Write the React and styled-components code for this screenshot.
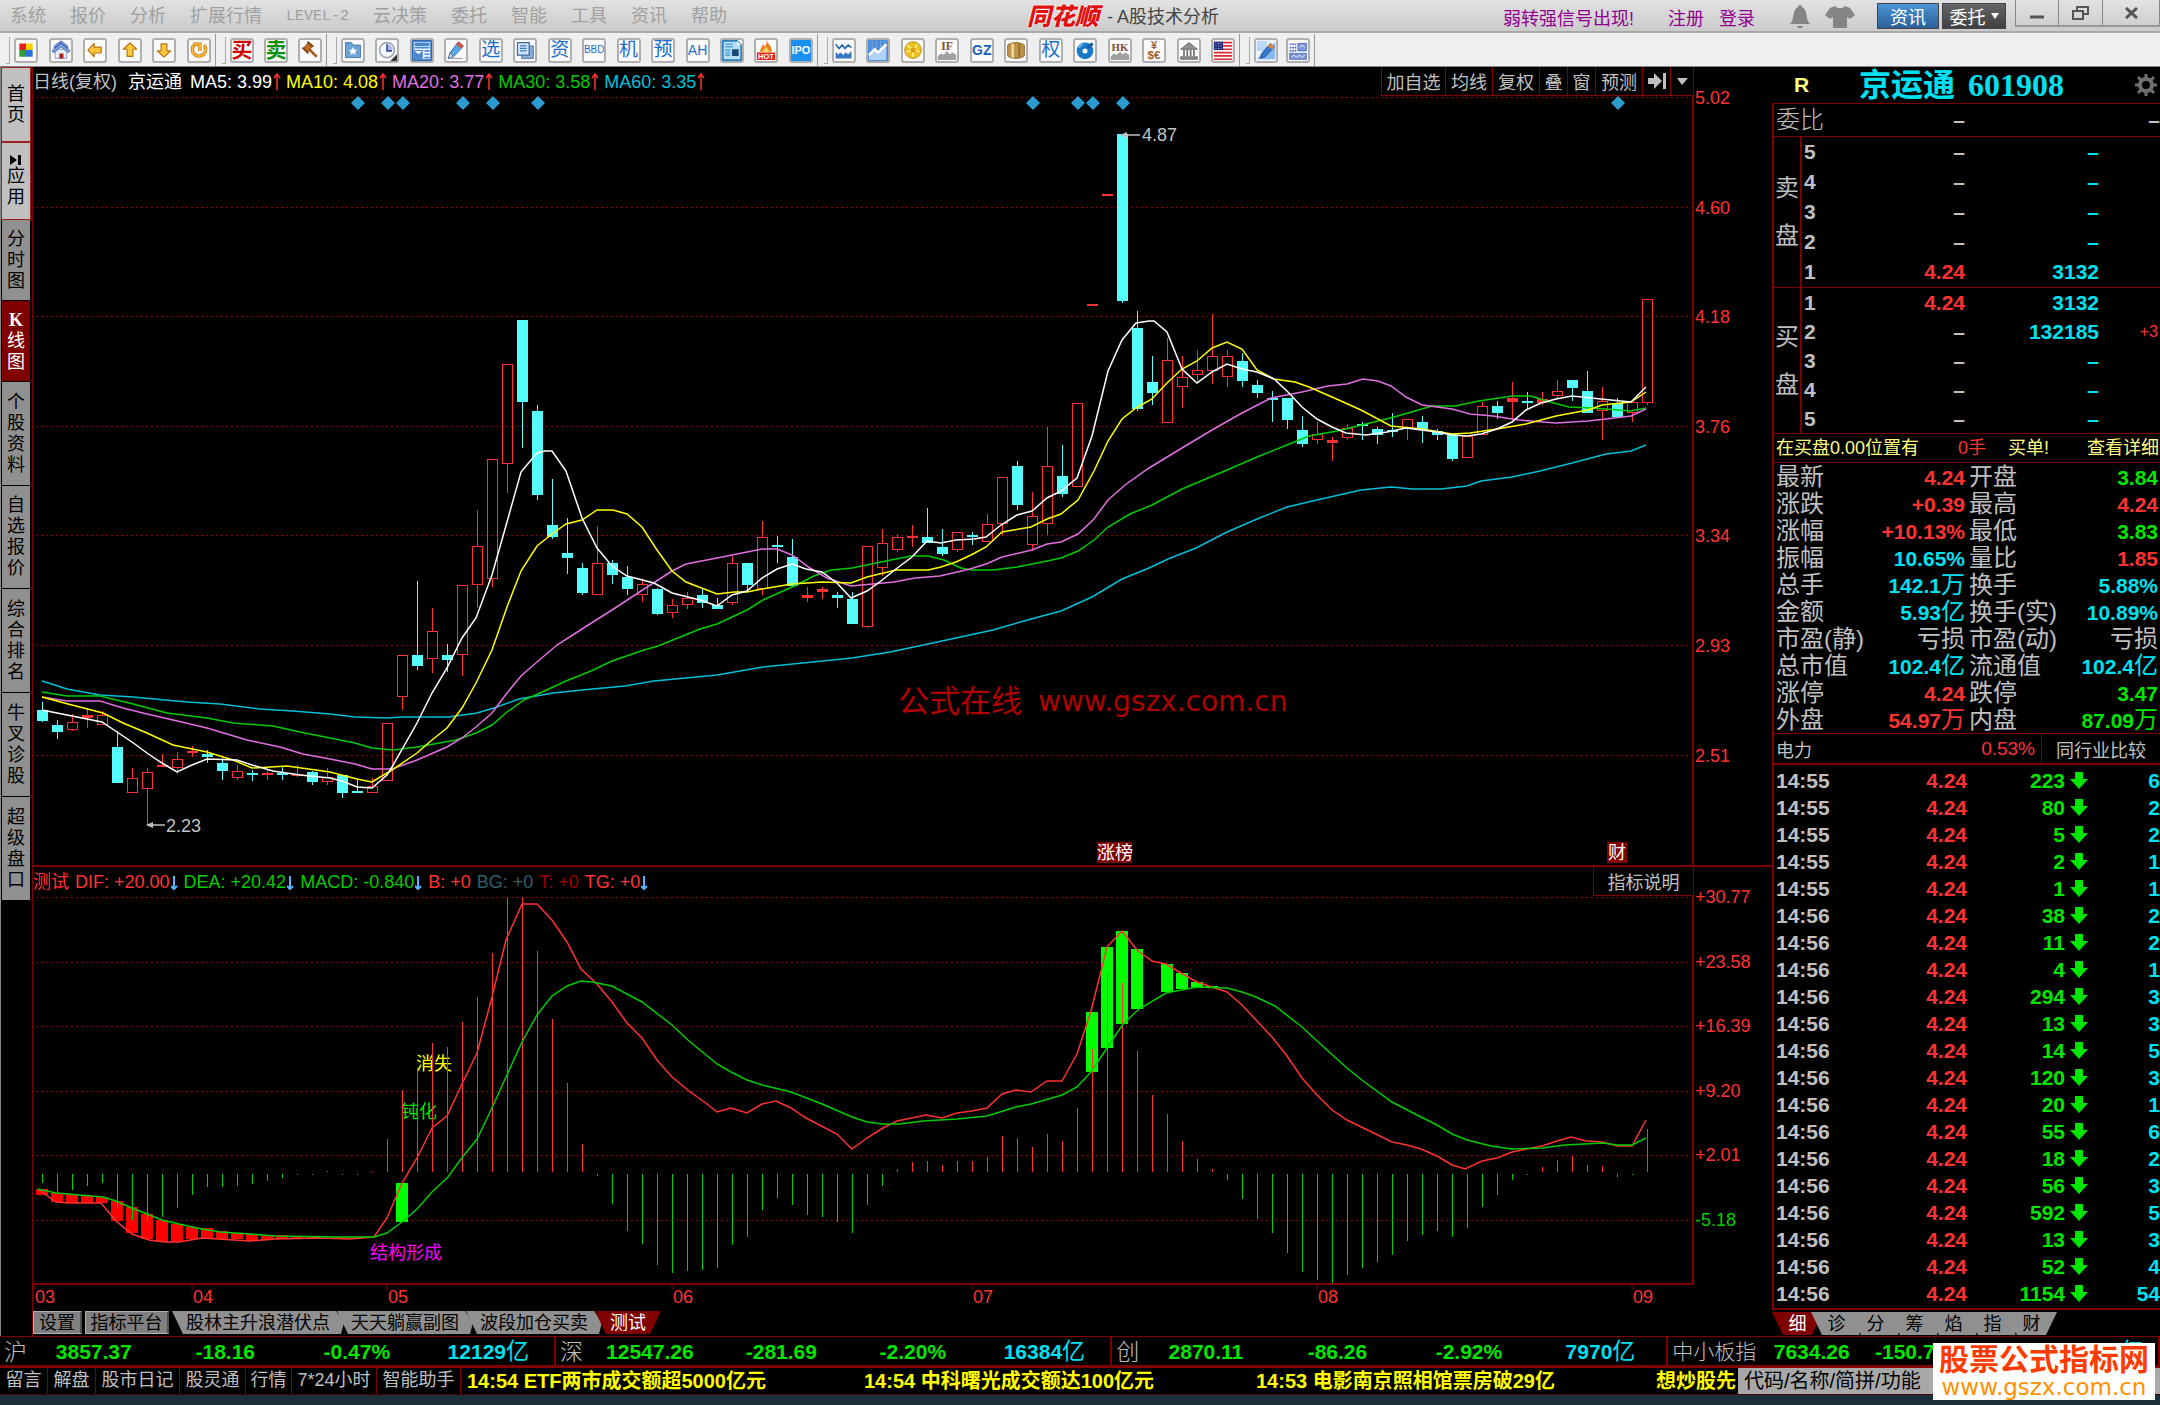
import React from "react";
import styled, { createGlobalStyle, css } from "styled-components";

const SANS = '"Liberation Sans", "Noto Sans CJK SC", sans-serif';
const MONO = '"Liberation Mono", "Noto Sans CJK SC", monospace';
const SERIF = '"Liberation Serif", "Noto Sans CJK SC", serif';

const COLORS = {
  line: "#800000",
  red: "#ff3232",
  green: "#00e600",
  cyan: "#00e0f0",
  candle: "#54fcfc",
  grey: "#c0c0c0",
  yellow: "#ffff00",
  pale: "#ffff80",
  pink: "#e070e0",
};

const MENU = [
  "系统",
  "报价",
  "分析",
  "扩展行情",
  "LEVEL-2",
  "云决策",
  "委托",
  "智能",
  "工具",
  "资讯",
  "帮助",
];

// each toolbar group: [width, icons]
const TOOLS = [
  [216, ["blocks", "home", "left", "up", "down", "refresh"]],
  [111, ["买", "卖", "hammer"]],
  [
    491,
    [
      "folder",
      "clock",
      "news",
      "pencil",
      "选",
      "copy",
      "资",
      "BBD",
      "机",
      "预",
      "AH",
      "doc",
      "hot",
      "IPO",
    ],
  ],
  [
    422,
    [
      "waves",
      "trend",
      "coin",
      "IF",
      "GZ",
      "barrel",
      "权",
      "disc",
      "HK",
      "fx",
      "bank",
      "flag",
    ],
  ],
  [75, ["edit", "grid"]],
];

const SIDE_TABS = [
  { text: "首页", size: 75, tone: "light" },
  { text: "应用", size: 78, tone: "light", icon: true },
  { text: "分时图", size: 81 },
  { text: "K线图", size: 81, tone: "active" },
  { text: "个股资料", size: 104 },
  { text: "自选报价", size: 103 },
  { text: "综合排名", size: 104 },
  { text: "牛叉诊股", size: 104 },
  { text: "超级盘口", size: 104 },
];

const MAS = [
  ["MA5: 3.99", "#ffffff"],
  ["MA10: 4.08", COLORS.yellow],
  ["MA20: 3.77", COLORS.pink],
  ["MA30: 3.58", "#00cc00"],
  ["MA60: 3.35", "#00c0d8"],
];

const CHART_BUTTONS = [
  ["加自选", 63],
  ["均线", 47],
  ["复权", 47],
  ["叠", 28],
  ["窗", 28],
  ["预测", 47],
];

const INDICATORS = [
  ["测试", COLORS.red],
  ["DIF: +20.00", COLORS.red, true],
  ["DEA: +20.42", "#00cc00", true],
  ["MACD: -0.840", "#00cc00", true],
  ["B: +0", COLORS.red],
  ["BG: +0", "#2f5f6b"],
  ["T: +0", "#a00000"],
  ["TG: +0", COLORS.red, true],
];

const X0 = 42;
const STEP = 15;

// r = rising, c = falling: high, body top, body bottom, low
const CANDLES = `c702,710,720,722 c720,725,731,739 r714,722,729,731 r708,715,717,728 r711,715,724,724 c731,747,782,782
r768,778,792,792 r768,772,788,825 r754,765,766,766 r752,759,767,774 r746,751,752,757 c750,754,756,763
c758,763,770,780 r765,771,777,780 c770,773,774,781 r769,773,774,780 c767,773,774,780 r765,774,775,777
c771,772,781,785 r768,777,781,785 c775,775,792,798 c780,791,792,792 r778,786,792,792 r723,723,780,780
r655,655,696,710 c581,655,665,670 r608,631,658,673 c644,655,659,672 r585,585,654,676 r510,546,584,608
r459,459,578,587 r364,364,463,493 c320,320,401,448 c405,411,494,500 c479,525,536,539 c518,553,557,574
c563,568,592,595 r526,563,594,594 c560,563,574,584 c566,577,588,595 r579,584,594,602 c588,589,613,615
r599,605,612,618 r592,598,604,609 c589,595,602,608 c598,605,608,609 r556,563,602,605 c563,563,584,592
r521,537,588,595 c536,545,546,563 c539,557,585,587 r587,595,597,602 r587,589,591,599 c592,595,597,608
c592,599,623,623 r546,546,626,628 r529,543,567,576 r534,537,549,552 r525,536,537,547 c508,537,542,542
c529,547,553,556 r532,532,549,552 c532,535,536,545 r514,524,541,541 r477,477,523,535 c461,466,504,510
r492,516,544,551 r427,466,523,535 c445,476,493,497 r403,403,486,486 r304,304,305,305 r194,194,195,195
c134,134,300,303 c311,328,408,411 c356,382,392,405 r338,360,422,422 r356,377,386,408 r350,370,374,382
r314,356,370,384 r350,356,376,387 c353,361,380,387 c380,385,392,398 c391,398,399,422 c398,398,419,429
c416,430,443,447 r422,434,439,444 r437,440,442,461 r424,428,437,440 c422,424,425,440 c427,429,434,444
c413,430,431,437 r419,419,428,440 c416,422,429,443 c429,431,434,440 c434,434,458,461 r436,436,457,457
r402,406,434,434 c401,406,412,419 r382,398,401,422 c392,401,402,410 r392,399,402,405 r380,391,395,398
c380,380,387,401 c371,391,412,413 r387,401,410,440 c398,403,416,417 r401,402,412,422 r299,299,402,405`
  .split(/\s+/)
  .map((c) => [c[0], ...c.slice(1).split(",").map(Number)]);

const MA_LINES = [
  [
    "#00c0d8",
    "42,681 67,689 100,695 133,697 187,702 220,704 260,709 293,711 330,714 355,717 387,718 401,717 448,717 477,713 494,708 519,699 553,693 582,690 625,686 654,681 717,675 763,667 852,658 890,652 928,644 993,630 1031,619 1061,611 1092,597 1122,579 1149,568 1168,559 1196,548 1227,532 1257,519 1287,507 1317,500 1361,490 1391,487 1413,489 1441,489 1467,486 1481,481 1512,477 1540,471 1572,463 1606,454 1631,451 1646,445",
  ],
  [
    "#00cc00",
    "42,692 67,696 100,696 133,704 167,713 207,718 233,723 273,726 300,732 330,738 355,743 372,748 393,750 417,747 456,740 476,733 492,725 507,712 524,700 540,693 566,681 591,671 612,661 641,651 658,646 700,629 717,624 747,610 763,600 792,587 814,576 831,570 852,568 881,562 911,556 928,556 944,560 961,568 972,570 993,570 1017,567 1047,561 1061,558 1078,551 1094,540 1108,527 1130,514 1152,505 1182,489 1227,470 1257,457 1287,445 1309,436 1337,431 1366,424 1394,417 1432,406 1455,406 1479,401 1512,396 1531,396 1550,402 1569,407 1592,408 1631,411 1646,408",
  ],
  [
    COLORS.pink,
    "42,697 67,701 100,701 123,708 147,714 173,720 207,728 247,740 280,747 303,754 330,759 355,764 372,769 392,769 417,760 447,747 462,738 476,727 492,713 507,693 521,676 537,662 557,645 582,629 612,610 641,591 672,571 686,564 717,558 747,552 762,549 777,549 792,555 810,568 827,578 851,586 894,582 915,578 940,576 970,569 986,564 1002,557 1032,550 1047,544 1061,542 1078,534 1094,519 1108,500 1125,485 1149,468 1182,448 1212,430 1242,413 1271,398 1302,392 1328,386 1347,384 1363,379 1378,381 1391,386 1406,397 1422,405 1452,409 1470,414 1493,416 1519,420 1556,423 1588,421 1606,419 1631,416 1646,409",
  ],
  [
    COLORS.yellow,
    "42,697 68,704 103,713 123,723 147,733 173,745 207,752 233,760 252,768 287,766 330,772 357,779 372,782 392,770 417,753 432,740 447,728 462,708 476,683 492,650 507,607 521,571 537,546 552,534 566,524 582,520 597,510 613,510 627,514 642,527 657,550 672,571 686,582 717,594 734,592 747,592 762,589 792,584 822,582 851,583 867,577 896,570 928,570 941,567 956,562 971,555 986,547 1002,532 1031,527 1047,519 1061,514 1078,500 1094,471 1108,441 1122,419 1136,408 1152,399 1167,383 1182,369 1197,361 1212,348 1227,342 1242,349 1257,370 1274,379 1295,382 1309,387 1332,397 1361,410 1391,426 1422,429 1452,434 1470,433 1497,429 1526,424 1556,416 1588,410 1602,405 1631,402 1646,392",
  ],
  [
    "#ffffff",
    "42,710 102,722 117,732 132,742 147,753 162,763 177,772 192,765 207,759 237,760 252,765 273,771 300,775 330,778 342,781 357,787 372,788 387,775 392,767 417,723 432,693 447,668 462,638 476,618 492,575 507,522 521,472 537,453 545,451 552,451 566,471 582,518 597,548 612,566 627,576 654,583 672,593 700,600 717,606 732,595 747,591 762,578 777,569 792,564 806,569 822,572 837,583 851,598 867,591 881,581 896,569 912,557 927,541 941,543 956,540 974,539 986,537 1001,525 1017,515 1032,511 1047,498 1061,491 1077,478 1092,436 1108,371 1122,340 1136,323 1149,321 1154,321 1167,332 1182,369 1197,383 1212,372 1227,364 1242,369 1257,372 1274,379 1287,391 1302,407 1317,419 1332,427 1346,433 1366,435 1387,432 1406,428 1437,432 1452,435 1467,436 1481,434 1497,429 1512,422 1526,410 1541,403 1556,399 1572,396 1601,399 1631,402 1646,387",
  ],
];

const DIAMONDS = [358, 388, 403, 463, 493, 538, 1033, 1078, 1093, 1123, 1618];
const PRICES = ["5.02", "4.60", "4.18", "3.76", "3.34", "2.93", "2.51"];
const LEVELS = ["+30.77", "+23.58", "+16.39", "+9.20", "+2.01", "-5.18"];
const MONTHS = [
  ["03", 34],
  ["04", 192],
  ["05", 387],
  ["06", 672],
  ["07", 972],
  ["08", 1317],
  ["09", 1632],
];

const ZERO = 1173;
const BARS = [
  1183, 1193, 1190, 1186, 1183, 1208, 1220, 1221, 1217, 1208, 1195, 1187, 1187,
  1186, 1184, 1181, 1178, 1175, 1175, 1171, 1175, 1175, 1171, 1139, 1090, 1068,
  1043, 1047, 1022, 997, 953, 898, 897, 951, 1019, 1083, 1144, 1176, 1204, 1231,
  1244, 1265, 1273, 1271, 1270, 1268, 1245, 1237, 1210, 1198, 1205, 1215, 1217,
  1222, 1233, 1205, 1186, 1169, 1162, 1161, 1165, 1161, 1161, 1157, 1136, 1138,
  1147, 1134, 1141, 1108, 1049, 973, 983, 1051, 1095, 1114, 1141, 1159, 1169,
  1180, 1199, 1219, 1233, 1253, 1272, 1280, 1283, 1275, 1268, 1262, 1255, 1241,
  1235, 1231, 1237, 1228, 1207, 1195, 1180, 1175, 1167, 1160, 1156, 1165, 1166,
  1177, 1175, 1129,
];

// filled blocks between the two lines: index, top, bottom
const RED_BLOCKS = [
  [0, 1189, 1195],
  [1, 1193, 1202],
  [2, 1194, 1203],
  [3, 1196, 1203],
  [4, 1197, 1203],
  [5, 1201, 1221],
  [6, 1207, 1233],
  [7, 1214, 1239],
  [8, 1220, 1242],
  [9, 1224, 1242],
  [10, 1227, 1239],
  [11, 1228, 1238],
  [12, 1231, 1239],
  [13, 1233, 1239],
  [14, 1234, 1241],
  [15, 1235, 1240],
  [16, 1235, 1239],
  [17, 1236, 1238],
  [18, 1236, 1238],
  [20, 1237, 1239],
  [21, 1237, 1239],
];
const GREEN_BLOCKS = [
  [24, 1183, 1222],
  [70, 1012, 1072],
  [71, 947, 1048],
  [72, 931, 1024],
  [73, 949, 1009],
  [75, 964, 992],
  [76, 973, 989],
  [77, 982, 987],
  [78, 986, 988],
];

const DIF =
  "38,1189 56,1202 69,1203 101,1203 116,1221 132,1234 149,1240 165,1242 179,1242 202,1238 250,1241 275,1239 321,1238 349,1239 374,1237 387,1218 402,1183 417,1158 432,1128 447,1116 461,1086 477,1053 491,1001 506,940 522,904 537,904 552,920 567,942 581,969 597,984 612,1002 627,1023 642,1038 657,1060 672,1077 689,1091 707,1104 717,1112 731,1108 747,1113 762,1104 776,1101 791,1108 806,1118 837,1134 852,1149 867,1138 883,1128 897,1121 926,1115 942,1118 957,1113 972,1111 987,1108 1002,1094 1016,1090 1031,1092 1047,1081 1062,1081 1077,1054 1091,1011 1107,947 1122,931 1137,950 1152,961 1166,964 1181,973 1197,982 1212,987 1227,992 1242,1005 1256,1020 1272,1037 1287,1056 1302,1078 1317,1095 1332,1110 1347,1120 1392,1142 1407,1145 1421,1149 1437,1156 1452,1165 1465,1169 1482,1161 1497,1158 1512,1152 1542,1146 1557,1141 1571,1137 1586,1141 1603,1142 1617,1146 1632,1146 1646,1120";
const DEA =
  "38,1189 56,1193 103,1197 116,1201 132,1208 147,1214 162,1220 179,1224 197,1228 220,1232 250,1234 275,1236 340,1237 374,1237 387,1233 402,1222 417,1209 432,1192 448,1177 461,1159 477,1139 491,1110 506,1077 522,1042 537,1015 552,996 567,986 581,981 592,982 612,986 642,1002 672,1025 689,1041 717,1064 731,1072 747,1080 762,1085 791,1092 822,1104 852,1117 867,1122 883,1124 899,1124 923,1121 957,1119 987,1116 1016,1107 1031,1104 1062,1095 1077,1087 1091,1072 1107,1048 1123,1024 1139,1009 1166,993 1197,987 1227,988 1242,992 1256,997 1275,1006 1302,1027 1317,1041 1347,1068 1363,1081 1392,1102 1417,1115 1437,1125 1452,1134 1467,1140 1491,1146 1512,1149 1542,1148 1565,1145 1603,1143 1617,1145 1632,1145 1646,1138";

const BOOK = [
  {
    side: ["卖", "盘"],
    row: 30,
    rows: [
      ["5", "", ""],
      ["4", "", ""],
      ["3", "", ""],
      ["2", "", ""],
      ["1", "4.24", "3132"],
    ],
  },
  {
    side: ["买", "盘"],
    row: 29,
    rows: [
      ["1", "4.24", "3132"],
      ["2", "", "132185", "+3"],
      ["3", "", ""],
      ["4", "", ""],
      ["5", "", ""],
    ],
  },
];

const STATS = [
  ["最新", "4.24", "", "red"],
  ["开盘", "3.84", "", "green"],
  ["涨跌", "+0.39", "", "red"],
  ["最高", "4.24", "", "red"],
  ["涨幅", "+10.13%", "", "red"],
  ["最低", "3.83", "", "green"],
  ["振幅", "10.65%", "", "cyan"],
  ["量比", "1.85", "", "red"],
  ["总手", "142.1", "万", "cyan"],
  ["换手", "5.88%", "", "cyan"],
  ["金额", "5.93", "亿", "cyan"],
  ["换手(实)", "10.89%", "", "cyan"],
  ["市盈(静)", "", "亏损", "grey"],
  ["市盈(动)", "", "亏损", "grey"],
  ["总市值", "102.4", "亿", "cyan"],
  ["流通值", "102.4", "亿", "cyan"],
  ["涨停", "4.24", "", "red"],
  ["跌停", "3.47", "", "green"],
  ["外盘", "54.97", "万", "red"],
  ["内盘", "87.09", "万", "green"],
];

const TICKS = [
  ["14:55", 223, 6],
  ["14:55", 80, 2],
  ["14:55", 5, 2],
  ["14:55", 2, 1],
  ["14:55", 1, 1],
  ["14:56", 38, 2],
  ["14:56", 11, 2],
  ["14:56", 4, 1],
  ["14:56", 294, 3],
  ["14:56", 13, 3],
  ["14:56", 14, 5],
  ["14:56", 120, 3],
  ["14:56", 20, 1],
  ["14:56", 55, 6],
  ["14:56", 18, 2],
  ["14:56", 56, 3],
  ["14:56", 592, 5],
  ["14:56", 13, 3],
  ["14:56", 52, 4],
  ["14:56", 1154, 54],
];

const INDEXES = [
  ["沪", "3857.37", "-18.16", "-0.47%", "12129"],
  ["深", "12547.26", "-281.69", "-2.20%", "16384"],
  ["创", "2870.11", "-86.26", "-2.92%", "7970"],
  ["中小板指", "7634.26", "-150.77", "-1.94%", "1988"],
];

const LINKS = [
  ["留言", 48],
  ["解盘", 48],
  ["股市日记", 84],
  ["股灵通", 66],
  ["行情", 46],
  ["7*24小时", 85],
  ["智能助手", 84],
];

const NEWS = [
  ["14:54 ETF两市成交额超5000亿元", 397],
  ["14:54 中科曙光成交额达100亿元", 392],
  ["14:53 电影南京照相馆票房破29亿", 400],
  ["想炒股先", 80],
];

const TEXT_TOOLS = {
  买: ["#d00000", 21, true],
  卖: ["#109010", 21, true],
  选: ["#1a6fd0", 19],
  资: ["#1a6fd0", 19],
  机: ["#1a6fd0", 19],
  预: ["#1a6fd0", 19],
  权: ["#1a6fd0", 19],
  BBD: ["#1a6fd0", 10],
  AH: ["#1a6fd0", 14],
  GZ: ["#1a5fc0", 14, true],
  IPO: ["#ffffff", 11, true, "#1a90f0"],
};

const Gold = ({ d, turn = 0 }) => (
  <path
    d={d}
    fill="#ffc83c"
    stroke="#b87410"
    strokeWidth="1.4"
    strokeLinejoin="round"
    transform={`rotate(${turn} 12 12)`}
  />
);

const ARROW = "M3.5 12 11 4v4.5h8.500v7H11V20Z";

const DRAWINGS = {
  blocks: (
    <>
      <path d="M4 4h8v8H4z" fill="#e02020" />
      <path d="M12 4h8v8h-8z" fill="#ffd000" />
      <path d="M4 12h8v8H4z" fill="#30a030" />
      <path d="M12 12h8v8h-8z" fill="#2870e0" />
    </>
  ),
  home: (
    <>
      <path d="M5 11h14v11H5z" fill="#e4eefc" stroke="#8098c0" />
      <path
        d="M1 13 12 3l11 10-3 2-8-7-8 7zM4 7 12 1l8 6v3l-8-6-8 6z"
        fill="#7aa0e0"
        stroke="#3a5ea8"
      />
      <path d="M10 16h5v6h-5z" fill="#b02020" />
    </>
  ),
  left: <Gold d={ARROW} />,
  up: <Gold d={ARROW} turn={90} />,
  down: <Gold d={ARROW} turn={-90} />,
  refresh: (
    <>
      <path
        d="M6 6a8 8 0 1 0 12 0M13 13V5H5M13 5v8"
        fill="none"
        stroke="#b87410"
        strokeWidth="4"
      />
      <path
        d="M6 6a8 8 0 1 0 12 0M13 13V5H5M13 5v8"
        fill="none"
        stroke="#ffb83c"
        strokeWidth="2.500"
      />
    </>
  ),
  hammer: (
    <>
      <path d="m11 11 9 9" stroke="#a85c20" strokeWidth="3" />
      <path d="M10 3 4 10l5 5 6-8z" fill="#c06c28" stroke="#7c3c10" />
      <path d="m3 9 7 7M9 2l7 6" stroke="#7c3c10" strokeWidth="2" />
    </>
  ),
  folder: (
    <>
      <path d="M3 3h7l2 3h9v15H3z" fill="#6ea4d8" stroke="#3a6ea8" />
      <path
        d="m12 8 1.500 3.500 3.500.3-2.600 2.400.8 3.600-3.200-2-3.200 2 .8-3.600L7 11.800l3.500-.3z"
        fill="#fff"
      />
    </>
  ),
  clock: (
    <>
      <circle cx="12" cy="12" r="9" fill="#f4f8fc" stroke="#a0a8b0" strokeWidth="2" />
      <path d="M12 5a7 7 0 0 1 7 7h-7z" fill="#b0b8f0" />
      <path d="M12 5v8h6" fill="none" stroke="#3050a0" strokeWidth="2" />
      <path d="M24 17v8h-8z" fill="#333" />
    </>
  ),
  news: (
    <>
      <path d="M1 1h22v23H1z" fill="#eef6ff" stroke="#2a68b8" strokeWidth="2" />
      <path d="M3 3h18v4H3zM2 12h11v11H2z" fill="#4a88d0" />
      <path d="M3 9h18M15 13h6M15 17h6M15 21h6" stroke="#4a88d0" strokeWidth="2" />
      <path d="m3 13 5 4 4-4z" fill="#fff" />
    </>
  ),
  pencil: (
    <>
      <path d="M15 2 21 7 9 20l-6 2 2-7z" fill="#58a8e8" stroke="#2868a8" />
      <path d="m15 2 6 5-3 3-6-5z" fill="#d85040" />
      <path d="m5 15 4 5-6 2z" fill="#f4e0c0" stroke="#2868a8" />
      <path d="M6 22h14" stroke="#888" />
    </>
  ),
  copy: (
    <>
      <path d="M8 7h14v15H8z" fill="#88acd8" stroke="#3a68a8" />
      <path d="M3 3h14v15H3z" fill="#d8e8fa" stroke="#3a68a8" strokeWidth="1.500" />
      <path d="M6 7h8M6 10h8M6 13h8" stroke="#3a78c8" strokeWidth="1.500" />
    </>
  ),
  doc: (
    <>
      <path d="M1 1h17l5 5v18H1z" fill="#b8dcf4" stroke="#2880c0" strokeWidth="2" />
      <path d="M4 5h9M4 8h9M4 12h6M4 15h6M4 18h6" stroke="#58a8d8" strokeWidth="2" />
      <path d="M12 11h8v8h-8z" fill="#184878" />
      <path d="M18 1v5h5" fill="#fff" />
    </>
  ),
  hot: (
    <>
      <path
        d="M13 0c1 5 6 6 6 14H5c0-5 3-6 3-9 2 1 2 2 2 3 2-2 3-4 3-8Z"
        fill="#f08020"
      />
      <path d="M12 7c0 3 4 4 4 8H8c0-4 4-4 4-8Z" fill="#ffe060" />
      <path d="M1 15h22v9H1z" fill="#e02818" />
      <text x="12" y="23" fontSize="9" fontWeight="700" fill="#fff" textAnchor="middle">
        HOT
      </text>
    </>
  ),
  waves: (
    <>
      <path d="m2 5 4 5 4-4 3 4 4-4 4 3" fill="none" stroke="#2868b0" strokeWidth="2" />
      <path d="M2 22v-8l3 3 3-2 3 3 3-3 3 2 4-4v9z" fill="#3878c0" />
    </>
  ),
  trend: (
    <>
      <path d="M0 0h24v25H0z" fill="#4c8cd8" />
      <path d="M5 1v22M10 1v22M15 1v22M20 1v22" stroke="#80b0e8" />
      <path d="m1 18 7-7 4 4 10-10v19H1z" fill="#b0d0f4" />
      <path d="m1 18 7-7 4 4 10-10" fill="none" stroke="#fff" strokeWidth="3" />
    </>
  ),
  coin: (
    <>
      <circle cx="12" cy="12" r="10" fill="#f0c020" stroke="#b08808" />
      <path
        d="M10 10 5 6M14 10l3-5M12 14v6M11 12l-7 2M14 12l6 2"
        stroke="#fff090"
        strokeWidth="2"
      />
      <circle cx="12" cy="12" r="3" fill="#d8a010" />
    </>
  ),
  IF: (
    <>
      <path d="M1 24v-5l4-3 3 2 4-5 3 4 4-2 4 3v6z" fill="#a0a0a0" />
      <text x="12" y="12" fontSize="14" fontWeight="700" fontFamily={SERIF} fill="#805030" textAnchor="middle">
        IF
      </text>
    </>
  ),
  barrel: (
    <>
      <path d="M2 6c5-4 15-4 20 0v13c-5 4-15 4-20 0z" fill="#c09448" stroke="#806020" />
      <path d="M8 4v17" stroke="#f0dca0" strokeWidth="3" />
      <path d="M16 4v17" stroke="#8a6828" strokeWidth="2" />
    </>
  ),
  disc: (
    <>
      <circle cx="12" cy="13" r="6.500" fill="none" stroke="#1878c8" strokeWidth="7" />
      <path d="m15 10 6-6" stroke="#1060a8" strokeWidth="4" />
      <path d="M5 9a8 8 0 0 1 5-4" fill="none" stroke="#70c0f8" strokeWidth="2" />
    </>
  ),
  HK: (
    <>
      <path d="M1 24v-5l4-3 3 2 4-4 3 3 4-2 4 3v6z" fill="#a0a0a0" />
      <text x="12" y="13" fontSize="13" fontWeight="700" fontFamily={SERIF} fill="#805030" textAnchor="middle">
        HK
      </text>
    </>
  ),
  fx: (
    <>
      <text x="12" y="11" fontSize="13" fontWeight="700" fill="#a06030" textAnchor="middle">
        ¥
      </text>
      <text x="12" y="23" fontSize="14" fontWeight="700" fill="#a06030" textAnchor="middle">
        $€
      </text>
    </>
  ),
  bank: (
    <>
      <path d="m12 3 10 8H2zM2 20h20v3H2z" fill="#909090" stroke="#606060" />
      <path d="M6 11v8M10 11v8M14 11v8M18 11v8" stroke="#707070" strokeWidth="2" />
    </>
  ),
  flag: (
    <>
      <path d="M1 2h22v21H1z" fill="#fff" />
      <path
        d="M1 3h22M1 7h22M1 11h22M1 15h22M1 19h22M1 23h22"
        stroke="#e02838"
        strokeWidth="2"
      />
      <path d="M1 2h11v10H1z" fill="#202880" />
      <path d="M3 4h8M3 7h8M3 10h8" stroke="#fff" strokeDasharray="1 2" />
    </>
  ),
  edit: (
    <>
      <path d="M0 0h24v25H0z" fill="#f0f4fa" />
      <path d="M1 1h12v12H1z" fill="#b8d8f8" />
      <path d="m1 23 8-10 5 2 9-13v21z" fill="#88b8f0" />
      <path d="M17 4 22 8 11 20l-6 2 2-6z" fill="#3878d0" stroke="#204c90" />
      <path d="m17 4 5 4-3 3-5-4z" fill="#e08830" />
    </>
  ),
  grid: (
    <>
      <path d="M2 5h8M2 9h8M2 13h8" stroke="#4868b0" strokeWidth="2" strokeDasharray="2 1" />
      <path d="M12 4h10v9H12z" fill="#8098d8" stroke="#4060b0" />
      <path d="M2 16h20v7H2z" fill="#8098d8" stroke="#4060b0" />
      <path d="m4 21 3-3 3 3 4-3 3 3 3-3M14 9l3-3 3 3" fill="none" stroke="#fff" />
    </>
  ),
};

function Tool({ name }) {
  if (TEXT_TOOLS[name]) {
    const [color, size, bold, bg] = TEXT_TOOLS[name];
    return (
      <ToolButton $color={color} $size={size} $bold={bold} $bg={bg}>
        {name}
      </ToolButton>
    );
  }
  return (
    <ToolButton aria-label={name}>
      <svg viewBox="0 0 24 25" width="20" height="21">
        {DRAWINGS[name]}
      </svg>
    </ToolButton>
  );
}

function Candle({ index, data }) {
  const [kind, high, top, bottom, low] = data;
  const x = X0 + index * STEP;
  const color = kind === "r" ? COLORS.red : COLORS.candle;
  const flat = bottom - top < 4;
  return (
    <g shapeRendering="crispEdges" stroke={color} strokeWidth="1">
      {high < top && <path d={`M${x} ${high}V${top}`} />}
      {low > bottom && <path d={`M${x} ${bottom}V${low}`} />}
      <rect
        x={x - 5}
        y={top}
        width="10"
        height={Math.max(bottom - top, 1)}
        fill={kind === "r" && !flat ? "none" : color}
      />
    </g>
  );
}

function PriceChart() {
  return (
    <Chart viewBox="33 96 1739 769" preserveAspectRatio="xMinYMin meet">
      {PRICES.map((p, i) => {
        const y = Math.round(97 + i * 109.6);
        return (
          <g key={p}>
            <GridLine d={`M36 ${y}H1692`} />
            <AxisText x="1695" y={y + 7}>
              {p}
            </AxisText>
          </g>
        );
      })}
      <path d="M1693 96V865" stroke={COLORS.line} strokeWidth="2" />
      {DIAMONDS.map((x) => (
        <path key={x} d={`M${x} 96l7 7-7 7-7-7z`} fill="#2c9cd0" />
      ))}
      {CANDLES.map((c, i) => (
        <Candle key={i} index={i} data={c} />
      ))}
      {MA_LINES.map(([color, points]) => (
        <Curve key={color} points={points} stroke={color} />
      ))}
      <path d="M147 825h18M1121 135h19" stroke={COLORS.grey} strokeWidth="1.500" />
      <path d="m146 825 7-3v6zM1120 135l7-3v6z" fill={COLORS.grey} />
      <Note x="166" y="832" fill={COLORS.grey}>
        2.23
      </Note>
      <Note x="1142" y="141" fill={COLORS.grey}>
        4.87
      </Note>
      <WaterText x="898" y="712" fontSize="31">
        公式在线
      </WaterText>
      <WaterText x="1038" y="711" fontSize="28">
        www.gszx.com.cn
      </WaterText>
      <path d="M1097 842h35v21h-35zM1607 842h20v21h-20z" fill={COLORS.line} />
      <Note x="1097" y="859" fill="#fff">
        涨榜
      </Note>
      <Note x="1608" y="859" fill="#fff">
        财
      </Note>
    </Chart>
  );
}

function MacdChart() {
  return (
    <Chart viewBox="33 896 1739 415" preserveAspectRatio="xMinYMin meet">
      {LEVELS.map((p, i) => {
        const y = Math.round(897 + i * 64.6);
        return (
          <g key={p}>
            <GridLine d={`M36 ${y}H1692`} />
            <AxisText x="1695" y={y + 6} $down={p[0] === "-"}>
              {p}
            </AxisText>
          </g>
        );
      })}
      <path d="M1693 896V1284M33 1284H1694" stroke={COLORS.line} strokeWidth="2" />
      {RED_BLOCKS.map(([i, top, bottom]) => (
        <rect
          key={i}
          x={X0 + i * STEP - 6}
          y={top}
          width="12"
          height={bottom - top}
          fill="#ff0000"
        />
      ))}
      {GREEN_BLOCKS.map(([i, top, bottom]) => (
        <rect
          key={i}
          x={X0 + i * STEP - 6}
          y={top}
          width="12"
          height={bottom - top}
          fill="#00ff00"
        />
      ))}
      <Note x="416" y="1070" fill={COLORS.yellow}>
        消失
      </Note>
      <Note x="401" y="1118" fill="#00e600">
        钝化
      </Note>
      <Note x="370" y="1259" fill="#ff00ff">
        结构形成
      </Note>
      {BARS.map((y, i) => (
        <path
          key={i}
          d={`M${X0 + i * STEP} ${y > ZERO ? ZERO + 1 : ZERO - 1}V${y}`}
          stroke={y > ZERO ? "#00cc00" : COLORS.red}
          shapeRendering="crispEdges"
        />
      ))}
      <Curve points={DIF} stroke={COLORS.red} />
      <Curve points={DEA} stroke="#00cc00" />
      {MONTHS.map(([m, x]) => (
        <g key={m}>
          <path d={`M${x} 1284v6`} stroke={COLORS.line} />
          <AxisText x={x + 1} y="1303">
            {m}
          </AxisText>
        </g>
      ))}
    </Chart>
  );
}

function TitleBar() {
  return (
    <Title>
      <Menu>
        {MENU.map((m) => (
          <MenuItem key={m}>{m}</MenuItem>
        ))}
      </Menu>
      <Brand>
        <Logo>同花顺</Logo>
        <span>- A股技术分析</span>
      </Brand>
      <Account>
        <a href="#signal">弱转强信号出现!</a>
        <AccountLinks>
          <a href="#register">注册</a>
          <a href="#login">登录</a>
        </AccountLinks>
        <svg width="22" height="25" viewBox="0 0 22 25" fill="#858585">
          <path d="M11 1c1.500 0 2 1 2 2 5 2 4 10 6 14l2 3H1l2-3c2-4 1-12 6-14 0-1 .5-2 2-2ZM8 22h6c-1 3-5 3-6 0Z" />
        </svg>
        <svg width="30" height="23" viewBox="0 0 30 23" fill="#858585">
          <path d="M10 1c2 3 8 3 10 0l5 2 5 7-5 4-3-2v11H8V12l-3 2-5-4 5-7z" />
        </svg>
      </Account>
      <TitleButton $blue>资讯</TitleButton>
      <TitleButton>
        委托
        <svg width="8" height="6">
          <path d="M0 0h8L4 6z" fill="#fff" />
        </svg>
      </TitleButton>
      <WindowButtons>
        <WindowButton aria-label="Minimise" $width={43}>
          <svg width="14" height="14">
            <path d="M0 11h14" stroke="#555" strokeWidth="3" />
          </svg>
        </WindowButton>
        <WindowButton aria-label="Restore" $width={44}>
          <svg width="17" height="14" fill="none" stroke="#555" strokeWidth="2">
            <path d="M5 4V1h11v7h-4M1 5h10v8H1z" />
          </svg>
        </WindowButton>
        <WindowButton aria-label="Close" $width={57}>
          <svg width="13" height="12" stroke="#555" strokeWidth="3">
            <path d="m1 1 11 10M12 1 1 11" />
          </svg>
        </WindowButton>
      </WindowButtons>
    </Title>
  );
}

function QuotePanel() {
  return (
    <Quote>
      <QuoteHead>
        <Flag>R</Flag>
        <QuoteName>
          <span>京运通</span>
          <span>601908</span>
        </QuoteName>
        <svg width="24" height="24" viewBox="0 0 24 24" fill="none" stroke="#707070">
          <circle cx="12" cy="12" r="6" strokeWidth="4" />
          <path
            d="M12 1v4M12 19v4M1 12h4M19 12h4M4 4l3 3M17 17l3 3M20 4l-3 3M4 20l3-3"
            strokeWidth="3"
          />
        </svg>
      </QuoteHead>
      <QuoteBody>
        <Ratio>
          <Cjk>委比</Cjk>
          <b>–</b>
          <b>–</b>
        </Ratio>
        <Book>
          <colgroup>
            <col width="27" />
            <col width="40" />
            <col width="124" />
            <col width="134" />
            <col />
          </colgroup>
          {BOOK.map(({ side, rows, row }) => (
            <BookSide key={side[0]} $row={row}>
              {rows.map(([level, price, volume, change], i) => (
                <tr key={level}>
                  {i === 0 && (
                    <SideCell rowSpan={5}>
                      {side.map((s) => (
                        <div key={s}>{s}</div>
                      ))}
                    </SideCell>
                  )}
                  <LevelCell>{level}</LevelCell>
                  <NumCell $color={price ? "red" : "grey"}>
                    {price || "–"}
                  </NumCell>
                  <NumCell $color="cyan">{volume || "–"}</NumCell>
                  <ChangeCell>{change}</ChangeCell>
                </tr>
              ))}
            </BookSide>
          ))}
        </Book>
        <Message>
          <span>在买盘0.00位置有</span>
          <em>0手</em>
          <span>买单!</span>
          <a href="#detail">查看详细</a>
        </Message>
        <Stats>
          {STATS.map(([label, value, unit, color]) => (
            <Stat key={label}>
              <dt>{label}</dt>
              <StatValue $color={color}>
                <b>{value}</b>
                {unit}
              </StatValue>
            </Stat>
          ))}
        </Stats>
        <Sector>
          <span>电力</span>
          <em>0.53%</em>
          <button>同行业比较</button>
        </Sector>
        <Ticks>
          <colgroup>
            <col width="68" />
            <col width="125" />
            <col width="98" />
            <col width="28" />
            <col />
          </colgroup>
          <tbody>
            {TICKS.map(([time, volume, count], i) => (
              <tr key={i}>
                <TimeCell>{time}</TimeCell>
                <NumCell $color="red">4.24</NumCell>
                <NumCell $color="green">{volume}</NumCell>
                <ArrowCell>
                  <svg width="18" height="17">
                    <path d="M5 0h8v7h5l-9 10L0 7h5z" fill={COLORS.green} />
                  </svg>
                </ArrowCell>
                <NumCell $color="cyan">{count}</NumCell>
              </tr>
            ))}
          </tbody>
        </Ticks>
      </QuoteBody>
      <QuoteTabs>
        {["细", "诊", "分", "筹", "焰", "指", "财"].map((t, i) => (
          <SlantTab key={t} $active={i === 0} $small>
            {t}
          </SlantTab>
        ))}
      </QuoteTabs>
    </Quote>
  );
}

export default function App() {
  return (
    <Page>
      <GlobalStyle />
      <TitleBar />
      <Toolbar>
        {TOOLS.map(([width, tools]) => (
          <ToolGroup key={width} $width={width}>
            {tools.map((t) => (
              <Tool key={t} name={t} />
            ))}
          </ToolGroup>
        ))}
      </Toolbar>
      <Main>
        <Sidebar>
          {SIDE_TABS.map(({ text, size, tone, icon }) => (
            <SideTab key={text} $size={size} $tone={tone}>
              {icon && (
                <svg width="12" height="12">
                  <path d="M0 1l7 5-7 5zM8 1h3v10H8z" />
                </svg>
              )}
              {text.split("").map((ch) => (
                <span key={ch}>{ch}</span>
              ))}
            </SideTab>
          ))}
        </Sidebar>
        <Center>
          <Pane $grow={798}>
            <PaneHead>
              <Legend>
                <Item $color={COLORS.grey}>日线(复权)</Item>
                <Item $color="#ffffff" $name>
                  京运通
                </Item>
                {MAS.map(([text, color]) => (
                  <Item key={text} $color={color}>
                    {text}
                    <svg width="8" height="17">
                      <path
                        d="M4 17V2M1 5l3-4 3 4"
                        stroke={COLORS.red}
                        strokeWidth="1.500"
                        fill="none"
                      />
                    </svg>
                  </Item>
                ))}
              </Legend>
              <ChartButtons>
                {CHART_BUTTONS.map(([text, width]) => (
                  <ChartButton key={text} $width={width}>
                    {text}
                  </ChartButton>
                ))}
                <ChartButton $width={28} aria-label="Jump to end">
                  <svg width="18" height="17" fill={COLORS.grey}>
                    <path d="M0 5h6V0l8 8-8 8v-5H0zM15 0h3v16h-3z" />
                  </svg>
                </ChartButton>
                <ChartButton $width={23} aria-label="More">
                  <svg width="11" height="7">
                    <path d="M0 0h11L5 7z" fill={COLORS.grey} />
                  </svg>
                </ChartButton>
              </ChartButtons>
            </PaneHead>
            <PriceChart />
          </Pane>
          <Pane $grow={444} $ruled>
            <PaneHead>
              <Legend $wide>
                {INDICATORS.map(([text, color, arrow]) => (
                  <Item key={text} $color={color}>
                    {text}
                    {arrow && (
                      <svg width="7" height="17">
                        <path
                          d="M3 3v13M0 13l3 3 3-3"
                          stroke="#54b4fc"
                          fill="none"
                          strokeWidth="2"
                        />
                      </svg>
                    )}
                  </Item>
                ))}
              </Legend>
              <ChartButtons>
                <ChartButton $width={99}>指标说明</ChartButton>
              </ChartButtons>
            </PaneHead>
            <MacdChart />
          </Pane>
          <IndicatorTabs>
            <FlatTab $width={49}>设置</FlatTab>
            <FlatTab $width={84}>指标平台</FlatTab>
            <SlantTab>股林主升浪潜伏点</SlantTab>
            <SlantTab>天天躺赢副图</SlantTab>
            <SlantTab>波段加仓买卖</SlantTab>
            <SlantTab $active>测试</SlantTab>
          </IndicatorTabs>
        </Center>
        <QuotePanel />
      </Main>
      <IndexBar>
        {INDEXES.map(([name, last, change, percent, amount]) => (
          <Index key={name} $long={name.length > 1}>
            <Cjk>{name}</Cjk>
            <b>{last}</b>
            <b>{change}</b>
            <b>{percent}</b>
            <Amount>
              <b>{amount}</b>亿
            </Amount>
          </Index>
        ))}
      </IndexBar>
      <NewsBar>
        {LINKS.map(([text, width]) => (
          <NewsLink key={text} href={`#${text}`} $width={width}>
            {text}
          </NewsLink>
        ))}
        <Ticker>
          {NEWS.map(([text, width]) => (
            <Headline key={text} $width={width}>
              {text}
            </Headline>
          ))}
        </Ticker>
        <Search aria-label="Search" placeholder="代码/名称/简拼/功能" />
      </NewsBar>
      <Strip />
      <Stamp>
        <strong>股票公式指标网</strong>
        <span>www.gszx.com.cn</span>
      </Stamp>
    </Page>
  );
}

const GlobalStyle = createGlobalStyle`
  * {
    box-sizing: border-box;
  }
  body {
    margin: 0;
    background: #000;
    font-family: ${SANS};
    font-size: 18px;
    color: ${COLORS.grey};
  }
  button {
    font: inherit;
    color: inherit;
    padding: 0;
    border: 0;
    background: none;
    white-space: nowrap;
  }
  a {
    color: inherit;
    text-decoration: none;
  }
  em {
    font-style: normal;
  }
`;

const Page = styled.div`
  position: relative;
  display: flex;
  flex-direction: column;
  height: 100vh;
  min-height: 1200px;
  overflow: hidden;
`;

const Title = styled.header`
  display: flex;
  align-items: center;
  height: 33px;
  flex: none;
  background: linear-gradient(#e2e2e2, #cbcbcb);
  border-bottom: 2px solid #a8a8a8;
`;

const Menu = styled.nav`
  display: flex;
  gap: 24px;
  padding: 2px 0 0 10px;
  flex: 1 1 0;
`;

const MenuItem = styled.button`
  font-family: ${MONO};
  font-size: 18px;
  line-height: 24px;
  color: #a0a0a0;

  &:nth-child(5) {
    font-size: 15px;
  }
`;

const Brand = styled.div`
  display: flex;
  align-items: center;
  gap: 8px;
  margin-right: 284px;
  padding-top: 2px;
  color: #444;
  line-height: 26px;
`;

const Logo = styled.strong`
  font-size: 24px;
  line-height: 26px;
  font-weight: 900;
  font-style: italic;
  color: #e01010;
  text-shadow: 0 0 2px #fff, 0 0 2px #fff;
`;

const Account = styled.div`
  display: flex;
  align-items: center;
  gap: 14px;
  padding: 2px 22px 0 0;
  color: #900090;

  > a {
    margin-right: 20px;
  }
`;

const AccountLinks = styled.div`
  display: flex;
  gap: 15px;
  margin-right: 20px;
`;

const TitleButton = styled.button`
  display: flex;
  align-items: center;
  justify-content: center;
  gap: 5px;
  width: ${({ $blue }) => ($blue ? 62 : 64)}px;
  height: 26px;
  margin-right: 3px;
  color: #fff;
  border: 1px solid #444;
  background: ${({ $blue }) =>
    $blue
      ? "linear-gradient(#4c94d8, #2a6098)"
      : "linear-gradient(#666, #404040)"};
`;

const WindowButtons = styled.div`
  display: flex;
  margin-left: 6px;
  height: 27px;
  align-self: flex-start;
  border-left: 1px solid #888;
  border-bottom: 2px solid #999;
`;

const WindowButton = styled.button`
  display: flex;
  align-items: center;
  justify-content: center;
  width: ${({ $width }) => $width}px;
  border-right: 1px solid #888;
`;

const Toolbar = styled.div`
  display: flex;
  flex: none;
  height: 34px;
  padding-top: 1px;
  background: #efefef;
  border-bottom: 1px solid #888;
`;

const ToolGroup = styled.div`
  position: relative;
  display: flex;
  align-items: center;
  justify-content: space-between;
  width: ${({ $width }) => $width}px;
  padding: 0 4px 0 14px;
  border-right: 1px solid #999;

  &::before {
    content: "";
    position: absolute;
    left: 6px;
    width: 3px;
    height: 26px;
    border: 1px solid #aaa;
    border-width: 0 1px 1px 0;
  }
`;

const ToolButton = styled.button`
  display: flex;
  align-items: center;
  justify-content: center;
  width: 24px;
  height: 25px;
  overflow: hidden;
  border: 2px solid #b0b0b0;
  border-radius: 3px;
  background: ${({ $bg }) => $bg || "#fafafa"};
  color: ${({ $color }) => $color};
  font-size: ${({ $size }) => $size}px;
  font-weight: ${({ $bold }) => ($bold ? 700 : 400)};
  line-height: 20px;

  svg {
    flex: none;
  }
`;

const Main = styled.main`
  display: flex;
  flex: 1 1 0;
  min-height: 0;
`;

const Sidebar = styled.nav`
  display: flex;
  flex-direction: column;
  width: 32px;
  flex: none;
  padding-right: 1px;
  border-left: 1px solid #888;
`;

const SideTab = styled.button`
  display: flex;
  flex-direction: column;
  align-items: center;
  justify-content: center;
  height: ${({ $size }) => $size}px;
  background: #909090;
  color: #000;
  border: 1px solid #000;
  border-width: 0 1px 1px;
  line-height: 21px;

  ${({ $tone }) =>
    $tone === "light" &&
    css`
      background: #c0c0c0;
      border: 1px solid #a02020;
    `}
  ${({ $tone }) =>
    $tone === "active" &&
    css`
      background: #800000;
      color: #fff;

      span:first-child {
        font-family: ${SERIF};
        font-weight: 700;
      }
    `}
`;

const Center = styled.section`
  display: flex;
  flex-direction: column;
  flex: 1 1 0;
  min-width: 0;
  border-left: 1px solid ${COLORS.line};
`;

const Pane = styled.div`
  display: flex;
  flex-direction: column;
  flex: ${({ $grow }) => $grow} 1 0;
  min-height: 0;
  border-top: ${({ $ruled }) => ($ruled ? 2 : 0)}px solid ${COLORS.line};
`;

const PaneHead = styled.div`
  display: flex;
  justify-content: space-between;
  flex: none;
  height: 29px;
  padding-right: 78px;
`;

const Legend = styled.div`
  display: flex;
  align-items: center;
  gap: ${({ $wide }) => ($wide ? 6 : 5)}px;
  white-space: nowrap;
`;

const Item = styled.span`
  display: flex;
  align-items: center;
  gap: 1px;
  margin: 0 ${({ $name }) => ($name ? "3px 0 6px" : "0")};
  color: ${({ $color }) => $color};
  line-height: 26px;
`;

const ChartButtons = styled.div`
  display: flex;
  border: 1px solid ${COLORS.line};
  border-width: 0 1px 1px;
`;

const ChartButton = styled.button`
  display: flex;
  align-items: center;
  justify-content: center;
  width: ${({ $width }) => $width}px;

  & + & {
    border-left: 1px solid ${COLORS.line};
  }
`;

const Chart = styled.svg`
  display: block;
  width: 100%;
  flex: 1 1 0;
  min-height: 0;
  overflow: visible;
`;

const GridLine = styled.path`
  stroke: #900000;
  stroke-dasharray: 2 3;
  shape-rendering: crispEdges;
`;

const AxisText = styled.text`
  fill: ${({ $down }) => ($down ? "#00cc00" : COLORS.red)};
  font-size: 18px;
`;

const Note = styled.text`
  font-size: 18px;
`;

const WaterText = styled.text`
  fill: #b00000;
  font-family: "DejaVu Sans", "Noto Sans CJK SC", sans-serif;
`;

const Curve = styled.polyline`
  fill: none;
  stroke-width: 1.5;
`;

const IndicatorTabs = styled.div`
  display: flex;
  flex: none;
  height: 25px;
  padding-bottom: 2px;
`;

const FlatTab = styled.button`
  width: ${({ $width }) => $width}px;
  height: 23px;
  margin-right: 3px;
  line-height: 20px;
  color: #000;
  background: #808080;
  border: 1px solid #b0b0b0;
  border-right: 2px solid #505050;
`;

const SlantTab = styled.button`
  height: 23px;
  margin-right: ${({ $small }) => ($small ? -12 : -7)}px;
  padding: 0 ${({ $small }) => ($small ? 15 : 14)}px;
  min-width: ${({ $small }) => ($small ? 51 : 66)}px;
  line-height: 22px;
  color: #000;
  background: #909090;
  clip-path: polygon(0 0, calc(100% - 8px) 0, 100% 50%, calc(100% - 3px) 100%, 11px 100%);

  &:last-child {
    clip-path: polygon(0 0, 100% 0, calc(100% - 11px) 100%, 11px 100%);
  }

  ${({ $active }) =>
    $active &&
    css`
      background: #800000;
      color: #fff;
      clip-path: polygon(0 0, 100% 0, calc(100% - 11px) 100%, 11px 100%);
    `}
`;

const Quote = styled.aside`
  display: flex;
  flex-direction: column;
  width: 388px;
  flex: none;
`;

const QuoteHead = styled.div`
  display: flex;
  align-items: center;
  height: 36px;
  flex: none;
  padding: 0 2px 0 22px;
`;

const Flag = styled.b`
  width: 65px;
  font-size: 21px;
  color: ${COLORS.pale};
`;

const QuoteName = styled.h1`
  display: flex;
  gap: 13px;
  flex: 1;
  margin: 0;
  font-family: ${SERIF};
  font-size: 32px;
  font-weight: 700;
  line-height: 36px;
  color: ${COLORS.cyan};
`;

const QuoteBody = styled.div`
  display: flex;
  flex-direction: column;
  flex: 1 1 0;
  min-height: 0;
  overflow: hidden;
  border: 1px solid ${COLORS.line};
  border-width: 1px 0 2px 2px;
`;

const Cjk = styled.span`
  font-size: 24px;
  line-height: 28px;
  font-weight: 300;
`;

const Ratio = styled.div`
  display: grid;
  grid-template-columns: 67px 122px 1fr;
  align-items: center;
  flex: none;
  height: 33px;
  padding-left: 2px;
  font-size: 21px;
  text-align: right;
  border-bottom: 1px solid ${COLORS.line};

  span {
    text-align: left;
  }
`;

const Book = styled.table`
  width: 100%;
  table-layout: fixed;
  border-collapse: collapse;
  flex: none;
  font-size: 21px;

  td {
    padding: 0;
  }
`;

const BookSide = styled.tbody`
  border-bottom: 1px solid ${COLORS.line};
  line-height: ${({ $row }) => $row}px;

  tr {
    height: ${({ $row }) => $row}px;
  }
`;

const SideCell = styled.td`
  border-right: 2px solid ${COLORS.line};
  font-size: 24px;
  line-height: 48px;
  text-align: center;
`;

const LevelCell = styled.td`
  && {
    padding-left: 2px;
    font-weight: 700;
  }
`;

const NumCell = styled.td`
  font-weight: 700;
  text-align: right;
  color: ${({ $color }) => COLORS[$color]};
`;

const ChangeCell = styled.td`
  && {
    padding-right: 2px;
  }
  font-size: 16px;
  text-align: right;
  color: ${COLORS.red};
`;

const Message = styled.div`
  display: grid;
  grid-template-columns: 182px 50px 1fr auto;
  align-items: center;
  flex: none;
  height: 29px;
  padding: 0 1px 0 2px;
  line-height: 24px;
  color: ${COLORS.pale};
  border-bottom: 1px solid ${COLORS.line};

  em {
    color: ${COLORS.red};
  }
`;

const Stats = styled.dl`
  display: grid;
  grid-template-columns: 1fr 1fr;
  flex: none;
  margin: 0;
  border-bottom: 1px solid ${COLORS.line};
`;

const Stat = styled.div`
  display: flex;
  justify-content: space-between;
  height: 27px;
  padding: 0 2px;
  font-size: 24px;
  line-height: 27px;
  white-space: nowrap;
`;

const StatValue = styled.dd`
  margin: 0;
  color: ${({ $color }) => COLORS[$color]};

  b {
    font-size: 21px;
  }
`;

const Sector = styled.div`
  display: grid;
  grid-template-columns: 1fr 1fr 119px;
  align-items: center;
  flex: none;
  height: 31px;
  padding-left: 2px;
  border-bottom: 2px solid ${COLORS.line};

  em {
    padding-right: 6px;
    font-size: 19px;
    text-align: right;
    color: ${COLORS.red};
  }

  button {
    height: 29px;
    border-left: 1px solid ${COLORS.line};
  }
`;

const Ticks = styled.table`
  width: 100%;
  table-layout: fixed;
  border-collapse: collapse;
  flex: none;
  margin-top: 2px;
  font-size: 21px;
  line-height: 27px;

  td {
    padding: 0;
    height: 27px;
  }
`;

const TimeCell = styled.td`
  && {
    padding-left: 2px;
  }
  font-weight: 700;
`;

const ArrowCell = styled.td`
  text-align: center;
  line-height: 0;
`;

const QuoteTabs = styled.div`
  display: flex;
  flex: none;
  height: 26px;
  padding-top: 2px;
`;

const IndexBar = styled.footer`
  display: flex;
  flex: none;
  height: 30px;
  border: 1px solid ${COLORS.line};
  border-width: 1px 0;
`;

const Index = styled.div`
  display: grid;
  grid-template-columns: ${({ $long }) => ($long ? 90 : 24)}px repeat(4, 1fr);
  align-items: center;
  flex: ${({ $long }) => ($long ? 491 : 556)} 1 0;
  padding-left: 4px;
  font-size: 21px;
  text-align: center;
  color: ${COLORS.green};
  border-right: 2px solid ${COLORS.line};

  > span:first-child {
    font-size: ${({ $long }) => ($long ? 21 : 23)}px;
    text-align: left;
    color: ${COLORS.grey};
  }
`;

const Amount = styled.span`
  color: ${COLORS.cyan};
  font-size: 23px;
  line-height: 28px;

  b {
    font-size: 21px;
  }
`;

const NewsBar = styled.div`
  display: flex;
  flex: none;
  height: 28px;
  border-top: 2px solid ${COLORS.line};
`;

const NewsLink = styled.a`
  width: ${({ $width }) => $width}px;
  border-right: 1px solid ${COLORS.line};
  text-align: center;
  line-height: 25px;
  white-space: nowrap;
`;

const Ticker = styled.div`
  display: flex;
  flex: 1 1 0;
  overflow: hidden;
  padding-left: 6px;
`;

const Headline = styled.span`
  width: ${({ $width }) => $width}px;
  flex: none;
  font-size: 20px;
  font-weight: 700;
  line-height: 26px;
  white-space: nowrap;
  color: ${COLORS.yellow};
`;

const Search = styled.input`
  width: 422px;
  height: 26px;
  padding: 0 6px;
  border: 0;
  background: #a8a8a8;
  font: inherit;
  font-size: 20px;
  color: #000;

  &::placeholder {
    color: #000;
    opacity: 1;
  }
`;

const Strip = styled.div`
  flex: none;
  height: 11px;
  background: #1c2e3a;
  border-top: 1px solid #400000;
`;

const Stamp = styled.div`
  position: absolute;
  right: 5px;
  bottom: 5px;
  display: flex;
  flex-direction: column;
  align-items: center;
  width: 222px;
  height: 57px;
  background: #fff;
  color: #ff3c00;

  strong {
    font-size: 30px;
    line-height: 34px;
  }

  span {
    font-family: "DejaVu Sans", sans-serif;
    font-size: 23px;
    line-height: 20px;
    color: #ff9000;
  }
`;
